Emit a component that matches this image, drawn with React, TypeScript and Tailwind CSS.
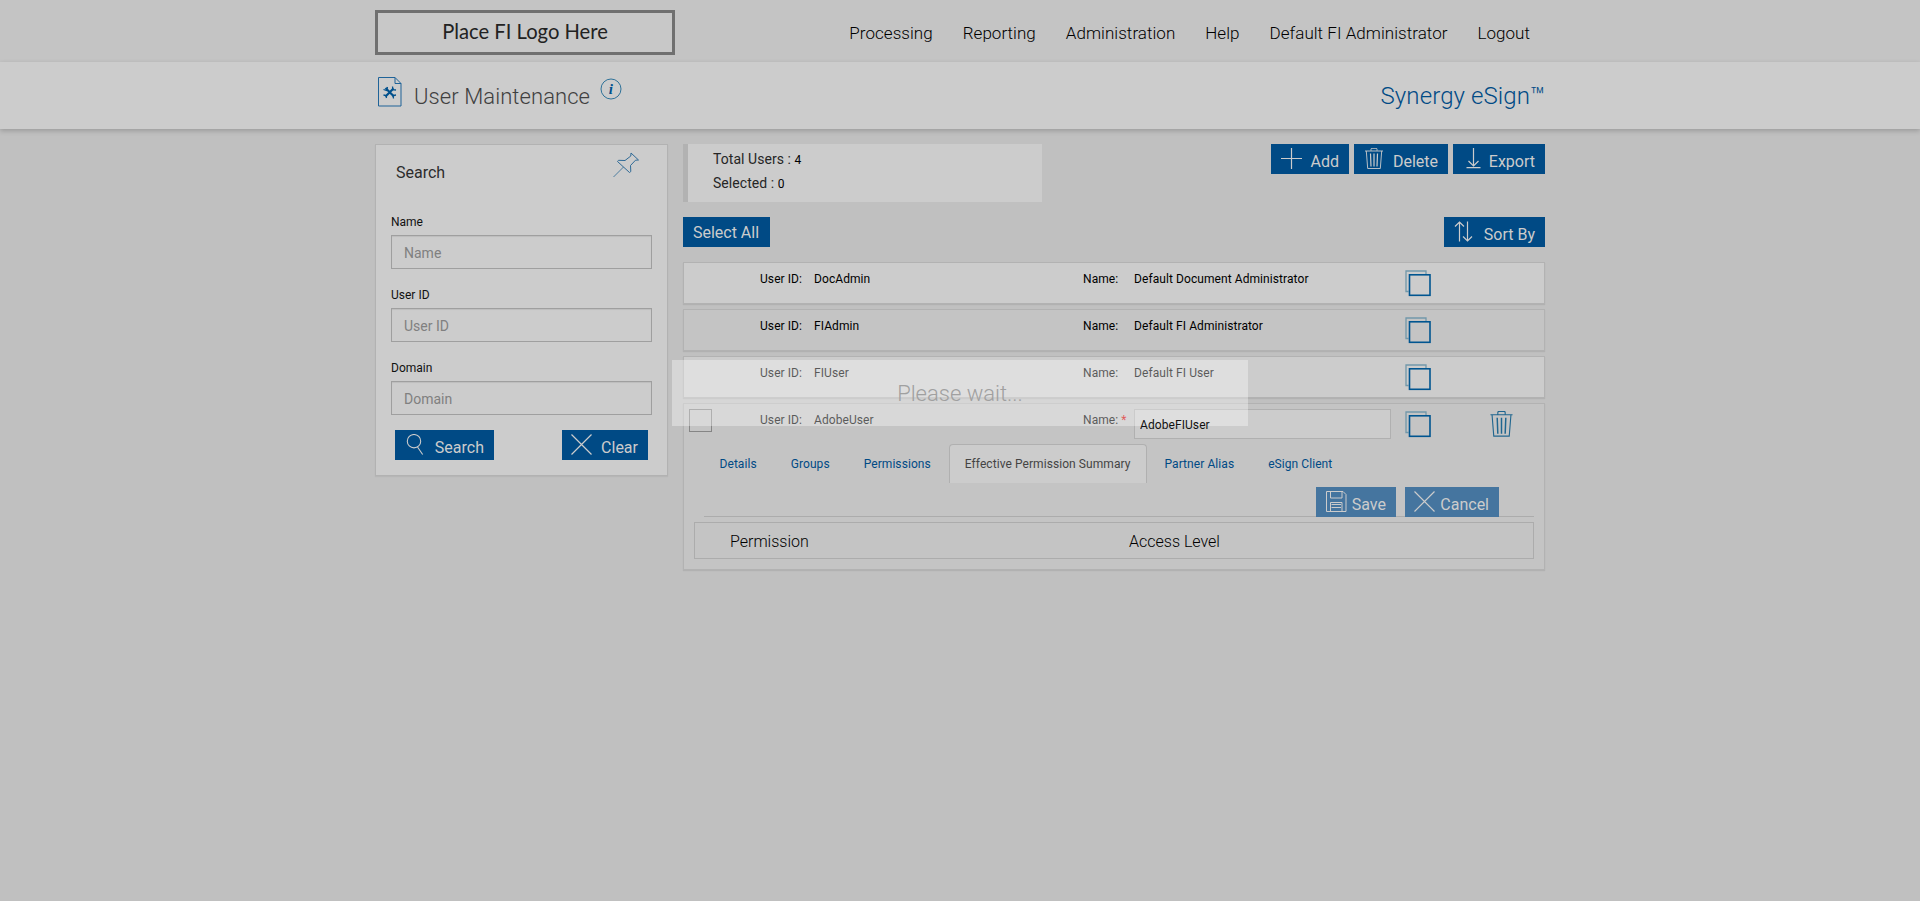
import React from 'react';

interface User {
  userId: string;
  name: string;
}

const users: User[] = [
  { userId: 'DocAdmin', name: 'Default Document Administrator' },
  { userId: 'FIAdmin', name: 'Default FI Administrator' },
  { userId: 'FIUser', name: 'Default FI User' },
];

const navItems = ['Processing', 'Reporting', 'Administration', 'Help', 'Default FI Administrator', 'Logout'];
const searchFields = ['Name', 'User ID', 'Domain'];
const tabs = ['Details', 'Groups', 'Permissions', 'Effective Permission Summary', 'Partner Alias', 'eSign Client'];
const activeTab = 'Effective Permission Summary';

const CloseIcon = () => (
  <svg width="22" height="22" viewBox="0 0 22 22" fill="none" stroke="currentColor" strokeWidth="1.2">
    <path d="M.5 .5l20 20M20.500 .5L.5 20.500" />
  </svg>
);

const SearchIcon = () => (
  <svg width="22" height="22" viewBox="0 0 22 22" fill="none" stroke="currentColor" strokeWidth="1.1">
    <circle cx="9" cy="7.200" r="6.700" />
    <path d="M12.500 13l5.200 7.500" />
  </svg>
);

const PlusIcon = () => (
  <svg width="22" height="22" viewBox="0 0 22 22" fill="none" stroke="currentColor" strokeWidth="1.2">
    <path d="M11.500 0v21M1 10.500h21" />
  </svg>
);

const TrashIcon = ({ size = 22 }: { size?: number }) => (
  <svg width={size} height={size} viewBox="0 0 22 22" fill="none" stroke="currentColor" strokeWidth="0.9">
    <path d="M2 3h18M3.300 3l1.400 17.500h12.600L18.700 3M8 2.800V1.300q0-1 1-1h4q1 0 1 1v1.500" />
    <path d="M7.500 5.500l.5 13M11 5.500v13M14.500 5.500l-.5 13" strokeWidth="1.2" />
  </svg>
);

const ExportIcon = () => (
  <svg width="22" height="22" viewBox="0 0 22 22" fill="none" stroke="currentColor" strokeWidth="1.2">
    <path d="M11.500 0v17.500M6.500 13l5 5 5-5M4.500 19.700h14" />
  </svg>
);

const SortIcon = () => (
  <svg width="22" height="22" viewBox="0 0 22 22" fill="none" stroke="currentColor" strokeWidth="1.2">
    <path d="M6.500 20.500V1M2 5.500L6.500 1 11 5.500M14.500.5V20M10 15.500l4.500 4.500 4.500-4.500" />
  </svg>
);

const SaveIcon = () => (
  <svg width="22" height="22" viewBox="0 0 22 22" fill="none" stroke="currentColor" strokeWidth="1">
    <path d="M1.500.5h16.500l3 3v17H1.500zM5.500.5v6.500h11.500V.5M5.500 20.500V11.500h11.500v9M6.500 13.500h9.500M6.500 16.500h9.500" />
  </svg>
);

const CopyIcon = () => (
  <svg className="shrink-0" width="27" height="27" viewBox="0 0 27 27" fill="none">
    <path d="M3.500 21.500H1V1H21V4" stroke="#7198aa" strokeWidth="1.3" />
    <rect x="4.500" y="4.800" width="20.500" height="20.500" stroke="#005590" strokeWidth="1.600" />
  </svg>
);

const PinIcon = () => (
  <svg width="26" height="26" viewBox="0 0 26 26" fill="none" stroke="#2f6a96" strokeWidth="1">
    <path d="M18 1l7.500 7-3 .2-5 5.300.3 6-1.300 1L4.500 9.500l1-1.200 6.500.2 5.800-4.500z" />
    <path d="M10.500 15L.5 25" strokeWidth=".8" />
  </svg>
);

const PageIcon = () => (
  <svg width="24" height="30" viewBox="0 0 24 30" fill="none" stroke="#1f6398" strokeWidth="1">
    <path d="M.5.500h16.500l6 6v22.500H.5zM17 .5v6h6" />
    <path d="M7.500 11l8.500 8.500M15.500 11.500L7.500 19.500" stroke="#00508c" strokeWidth="2.200" />
    <path d="M5.500 12.500l3 1 1-3.500M14.500 9.500l.5 3.200 3 .3M15.500 21.500l-.5-3 3-.5M5.500 18l2.500 .5.500 2.500" stroke="#00508c" strokeWidth="1.300" />
  </svg>
);

const InfoIcon = () => (
  <svg width="22" height="22" viewBox="0 0 22 22">
    <circle cx="11" cy="11" r="10" fill="none" stroke="#2f7299" strokeWidth="1" />
    <text x="10.800" y="15.500" textAnchor="middle" fill="#00508c" fontSize="15" fontWeight="700" fontStyle="italic" fontFamily="Liberation Serif, serif">i</text>
  </svg>
);

interface ButtonProps {
  label: string;
  icon: React.ReactNode;
  className: string;
}

const IconButton: React.FC<ButtonProps> = ({ label, icon, className }) => (
  <button className={`flex h-[30px] shrink-0 justify-between pt-1 text-base text-[#cccccc] ${className}`}>
    {icon}
    <span className="leading-[28px]">{label}</span>
  </button>
);

const App: React.FC = () => {
  return (
    <div className="relative h-[901px] overflow-hidden bg-[#c0c0c0] font-['Roboto',sans-serif] text-xs text-black">
      {/* Top navigation */}
      <header className="h-[62px] bg-[#c4c4c4] pt-2.5">
        <div className="mx-auto flex w-[1170px] items-start justify-between">
          <div className="h-[45px] w-[300px] border-3 border-[#707070] bg-[#c8c8c8] text-center font-['Lato',sans-serif] text-[20.200px] leading-[37px] text-[#222]">
            Place FI Logo Here
          </div>
          <nav className="mt-2 flex gap-[30px] pr-[15px] text-[17px] leading-[31px] font-light tracking-[0.04px]">
            {navItems.map((item) => (
              <a key={item}>{item}</a>
            ))}
          </nav>
        </div>
      </header>

      {/* Page title */}
      <div className="h-[67px] bg-[#cccccc] shadow-[0_2px_5px_rgba(0,0,0,0.2)]">
        <div className="mx-auto flex w-[1170px] items-start pl-[3px] font-light">
          <div className="mt-[15px]"><PageIcon /></div>
          <h1 className="mt-[19px] ml-[12px] text-[22px] leading-8 tracking-[0.08px] text-[#404040]">User Maintenance</h1>
          <div className="mt-4 ml-[10px]"><InfoIcon /></div>
          <span className="mt-[18px] ml-auto text-2xl tracking-[0.1px] text-[#004a85]">Synergy eSign™</span>
        </div>
      </div>

      <main className="mx-auto mt-[15px] flex w-[1170px] items-start gap-[15px]">
        {/* Search */}
        <aside className="h-[332px] w-[293px] shrink-0 border border-[#b2b2b2] bg-[#cccccc] px-[15px] shadow-[0_1px_1px_rgba(0,0,0,0.05)]">
          <div className="flex h-[69px] items-start justify-between pr-[13px] pl-[5px]">
            <h2 className="mt-4 text-base text-[#2c2c2c]">Search</h2>
            <div className="mt-[7px]"><PinIcon /></div>
          </div>
          {searchFields.map((field) => (
            <div key={field} className="h-[73px]">
              <label className="block h-[21px] leading-4 text-[#111]">{field}</label>
              <input
                type="text"
                placeholder={field}
                className="block h-[34px] w-[261px] border border-[#9f9f9f] px-3 pt-0.5 text-sm shadow-[inset_0_1px_1px_rgba(0,0,0,0.075)] placeholder:text-[#808080]"
              />
            </div>
          ))}
          <div className="-mt-[3px] flex justify-between pr-1 pl-1">
            <IconButton label="Search" icon={<SearchIcon />} className="w-[99px] bg-[#004a85] pr-[10px] pl-[10px]" />
            <IconButton label="Clear" icon={<CloseIcon />} className="w-[86px] bg-[#004a85] pr-[10px] pl-[9px]" />
          </div>
        </aside>

        <section className="w-[862px]">
          <div className="flex h-[73px] items-start">
            <div className="mr-auto h-[58px] w-[359px] border-l-5 border-[#b2b2b2] bg-[#cccccc] pt-[3px] pl-[25px] text-sm leading-6 text-[#262626]">
              <p className="tracking-[0.05px]">Total Users : <span className="text-xs text-black">4</span></p>
              <p className="tracking-[0.05px]">Selected : <span className="text-xs text-black">0</span></p>
            </div>
            <div className="flex gap-[5px]">
              <IconButton label="Add" icon={<PlusIcon />} className="w-[78px] bg-[#004a85] pr-[10px] pl-[9px]" />
              <IconButton label="Delete" icon={<TrashIcon />} className="w-[94px] bg-[#004a85] pr-[10px] pl-[9px]" />
              <IconButton label="Export" icon={<ExportIcon />} className="w-[92px] bg-[#004a85] pr-[10px] pl-[9px]" />
            </div>
          </div>
          <div className="flex h-[45px] items-start justify-between">
            <button className="h-[30px] w-[87px] bg-[#004a85] pt-0.5 pr-px text-base text-[#cccccc]">Select All</button>
            <IconButton label="Sort By" icon={<SortIcon />} className="w-[101px] bg-[#004a85] pr-[10px] pl-[9px]" />
          </div>

          {/* User list */}
          {users.map((user, index) => (
            <div
              key={user.userId}
              className={`mb-[5px] flex h-[42px] border border-[#b2b2b2] pt-2 pl-[76px] leading-4 tracking-[0.08px] shadow-[0_1px_1px_rgba(0,0,0,0.08)] ${
                index % 2 === 0 ? 'bg-[#cccccc]' : 'bg-[#c4c4c4]'
              }`}
            >
              <span className="w-[54px]">User ID:</span>
              <span className="w-[269px]">{user.userId}</span>
              <span className="w-[51px]">Name:</span>
              <span className="w-[271px]">{user.name}</span>
              <div className="-mt-px"><CopyIcon /></div>
            </div>
          ))}

          <div className="h-[167px] border border-[#b2b2b2] bg-[#c4c4c4] shadow-[0_1px_1px_rgba(0,0,0,0.08)]">
            <div className="flex h-10 items-start pt-[5px] pl-[5px] leading-4 tracking-[0.08px]">
              <div className="mr-[48px] h-[23px] w-[23px] border border-[#858585]" />
              <span className="mt-[3px] w-[54px]">User ID:</span>
              <span className="mt-[3px] w-[269px]">AdobeUser</span>
              <span className="mt-[3px] w-[51px]">Name: <span className="text-[#d00000]">*</span></span>
              <div className="mr-[14px] flex h-[30px] w-[257px] border border-[#b0b0b0] bg-[#cccccc]">
                <input
                  type="text"
                  defaultValue="AdobeFIUser"
                  className="relative z-10 w-full bg-transparent px-[5px] pt-0.5 text-[#111]"
                />
              </div>
              <div className="mt-[2px] mr-[56px]"><CopyIcon /></div>
              <div className="mt-[2px] text-[#20668f]"><TrashIcon size={27} /></div>
            </div>

            <div className="flex h-[43px] gap-[2px] pl-[19.500px] leading-[17px] tracking-[0.07px]">
              {tabs.map((tab) => (
                <a
                  key={tab}
                  className={`h-[39px] border border-b-0 px-[15px] py-[11px] ${
                    tab === activeTab
                      ? 'rounded-t border-[#b0b0b0] bg-[#cccccc] text-[#444444]'
                      : 'border-transparent text-[#004a85]'
                  }`}
                >
                  {tab}
                </a>
              ))}
            </div>

            <div className="mr-[10px] ml-[20px] flex h-[30px] justify-end gap-[9px] border-b border-[#acacac] pr-[35px]">
              <IconButton label="Save" icon={<SaveIcon />} className="w-[80px] bg-[#45759f] pr-[10px] pl-[9px]" />
              <IconButton label="Cancel" icon={<CloseIcon />} className="w-[94px] bg-[#45759f] pr-[10px] pl-[9px]" />
            </div>

            <div className="mt-[5px] mr-[10px] ml-[10px] flex h-[37px] border border-[#acacac] pl-[35px] text-base leading-[37px] font-light">
              <span className="w-[399px]">Permission</span>
              <span>Access Level</span>
            </div>
          </div>
        </section>
      </main>

      {/* Loading message */}
      <div className="absolute top-[360px] left-[672px] h-[66px] w-[576px] bg-white/35 text-center text-[22px] leading-[67px] font-light text-[#a0a0a0]">
        Please wait...
      </div>
    </div>
  );
};

export default App;
